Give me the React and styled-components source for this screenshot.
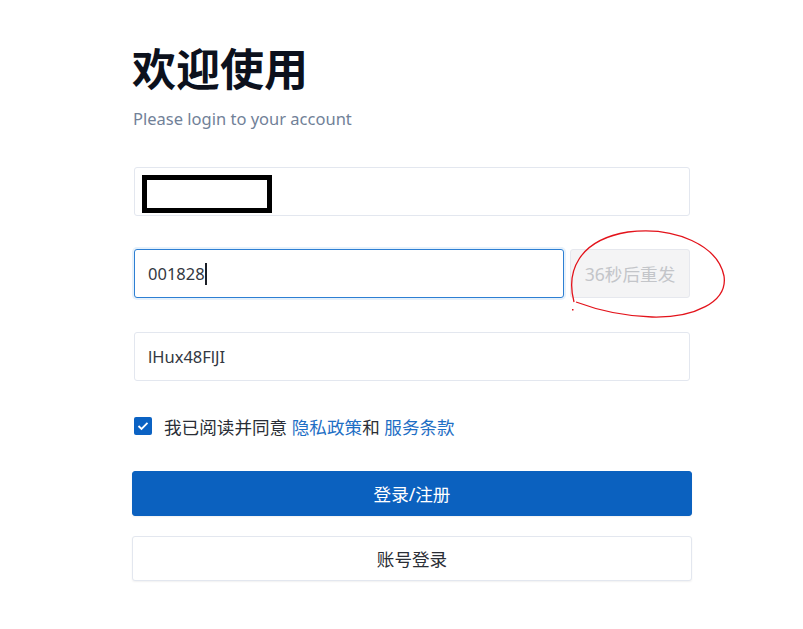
import React from "react";
import styled, { createGlobalStyle } from "styled-components";

const Global = createGlobalStyle`
  html, body { margin: 0; padding: 0; background: #ffffff; }
  body { font-family: "Noto Sans", "Noto Sans CJK SC", sans-serif; color: #1f2329; }
  * { box-sizing: border-box; }
`;

const Page = styled.div`
  position: relative;
  width: 803px;
  height: 629px;
  overflow: hidden;
`;

const Panel = styled.div`
  width: 560px;
  margin-left: 132px;
  padding-top: 36px;
  display: flex;
  flex-direction: column;
`;

const Title = styled.h1`
  margin: 0;
  font-family: "Noto Sans CJK SC", sans-serif;
  font-size: 44px;
  line-height: 62px;
  font-weight: 700;
  color: #0c111d;
  letter-spacing: 0;
`;

const Subtitle = styled.p`
  margin: 9px 0 0 1px;
  font-size: 16.5px;
  line-height: 24px;
  color: #718198;
`;

const Form = styled.div`
  margin-top: 36px;
  display: flex;
  flex-direction: column;
`;

const Row = styled.div`
  display: flex;
  gap: 6px;
  padding: 0 2px;
  margin-bottom: ${(p) => p.$mb || 33}px;
`;

const Field = styled.div`
  position: relative;
  flex: 1;
  height: 49px;
  display: flex;
  align-items: center;
  padding: 0 13px;
  border: 1px solid ${(p) => (p.$focus ? "#2d7fd3" : "#e3e7ef")};
  box-shadow: ${(p) => (p.$focus ? "0 0 0 2px #e6f1fb" : "none")};
  border-radius: 3px;
  font-size: 16.5px;
  color: #333842;
  background: #fff;
`;

const Caret = styled.span`
  display: inline-block;
  width: 2px;
  height: 22px;
  background: #1b1f27;
`;

const Redaction = styled.div`
  position: absolute;
  left: 7px;
  top: 7px;
  width: 130px;
  height: 38px;
  border: 5px solid #000;
  background: #fff;
`;

const SendButton = styled.div`
  width: 120px;
  height: 49px;
  display: flex;
  align-items: center;
  justify-content: center;
  background: #f4f4f5;
  border: 1px solid #e6e8ee;
  border-radius: 3px;
  color: #c3c5c9;
  font-size: 17.6px;
`;

const Agree = styled.div`
  display: flex;
  align-items: center;
  gap: 12px;
  padding: 0 2px;
  height: 24px;
  margin-bottom: 33px;
  font-size: 17.6px;
  color: #2a2e36;
`;

const Box = styled.span`
  width: 18px;
  height: 18px;
  border-radius: 2px;
  background: #0b62c3;
  display: flex;
  align-items: center;
  justify-content: center;
`;

const Link = styled.a`
  color: #1f6fc5;
  text-decoration: none;
`;

const Button = styled.div`
  height: 45px;
  display: flex;
  align-items: center;
  justify-content: center;
  border-radius: 3px;
  font-size: 17.6px;
  background: ${(p) => (p.$primary ? "#0b61bf" : "#ffffff")};
  color: ${(p) => (p.$primary ? "#ffffff" : "#2a2e36")};
  border: 1px solid ${(p) => (p.$primary ? "#0b61bf" : "#e3e7ef")};
  box-shadow: 0 1px 2px rgba(0, 0, 0, 0.06);
  margin-bottom: ${(p) => p.$mb || 0}px;
`;

const Annotation = styled.svg`
  position: absolute;
  left: 0;
  top: 0;
  pointer-events: none;
`;

export default function App() {
  return (
    <Page>
      <Global />
      <Panel>
        <Title>欢迎使用</Title>
        <Subtitle>Please login to your account</Subtitle>
        <Form>
          <Row>
            <Field>
              <Redaction />
            </Field>
          </Row>
          <Row $mb={34}>
            <Field $focus>
              001828<Caret />
            </Field>
            <SendButton>36秒后重发</SendButton>
          </Row>
          <Row $mb={33}>
            <Field>lHux48FlJI</Field>
          </Row>
          <Agree>
            <Box>
              <svg width="12" height="10" viewBox="0 0 12 10">
                <path d="M1.5 5 L4.5 8 L10.5 1.8" fill="none" stroke="#fff" strokeWidth="1.8" />
              </svg>
            </Box>
            <span>
              我已阅读并同意 <Link>隐私政策</Link>和 <Link>服务条款</Link>
            </span>
          </Agree>
          <Button $primary $mb={20}>登录/注册</Button>
          <Button>账号登录</Button>
        </Form>
      </Panel>
      <Annotation width="803" height="629">
        <path
          d="M574 302 C566 272, 578 240, 628 232 C676 226, 718 246, 724 276 C728 302, 694 318, 652 317 C618 316, 592 308, 576 302"
          fill="none"
          stroke="#e3131b"
          strokeWidth="1.3"
        />
        <rect x="572" y="309" width="1.5" height="1.5" fill="#e3131b" />
      </Annotation>
    </Page>
  );
}
